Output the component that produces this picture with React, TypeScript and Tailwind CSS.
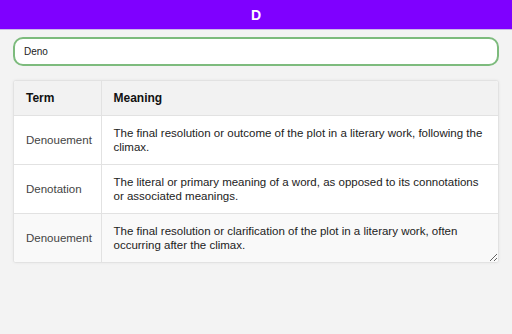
import React from "react";

const rows = [
  {
    term: "Denouement",
    meaning:
      "The final resolution or outcome of the plot in a literary work, following the climax.",
  },
  {
    term: "Denotation",
    meaning:
      "The literal or primary meaning of a word, as opposed to its connotations or associated meanings.",
  },
  {
    term: "Denouement",
    meaning:
      "The final resolution or clarification of the plot in a literary work, often occurring after the climax.",
  },
];

export default function App() {
  return (
    <div className="min-h-[334px] bg-[#f3f3f3] font-['Liberation_Sans',Arial,sans-serif]">
      <header className="h-[30px] bg-[#7f00ff] border-b border-[#c9b8e6] flex items-center justify-center">
        <h1 className="text-white font-bold text-[14px] leading-none">D</h1>
      </header>

      <div className="px-[13px] pt-[7px]">
        <input
          defaultValue="Deno"
          className="w-full h-[29px] rounded-[10px] border-2 border-[#7dbb7d] bg-white px-[9px] text-[10px] text-[#222] outline-none"
        />

        <div className="mt-[14px] resize overflow-auto rounded-[3px] border border-[#e2e2e2] bg-white shadow-[0_0_3px_rgba(0,0,0,0.06)]">
          <table className="w-full table-fixed border-collapse text-[11.5px] leading-[14px]">
            <colgroup>
              <col className="w-[87px]" />
              <col />
            </colgroup>
            <thead>
              <tr className="bg-[#f2f2f2]">
                <th className="text-left text-[12px] font-bold text-[#111] px-[12px] py-[10px] border-b border-r border-[#e2e2e2]">
                  Term
                </th>
                <th className="text-left text-[12px] font-bold text-[#111] px-[12px] py-[10px] border-b border-[#e2e2e2]">
                  Meaning
                </th>
              </tr>
            </thead>
            <tbody>
              {rows.map((r, i) => (
                <tr key={i} className={i === 2 ? "bg-[#f9f9f9]" : "bg-white"}>
                  <td
                    className={`px-[12px] py-[10px] text-[#444] border-r border-[#e2e2e2] ${
                      i < 2 ? "border-b" : ""
                    }`}
                  >
                    {r.term}
                  </td>
                  <td
                    className={`pl-[12px] pr-[8px] py-[10px] text-[#222] border-[#e2e2e2] ${
                      i < 2 ? "border-b" : ""
                    }`}
                  >
                    {r.meaning}
                  </td>
                </tr>
              ))}
            </tbody>
          </table>
        </div>
      </div>
    </div>
  );
}
